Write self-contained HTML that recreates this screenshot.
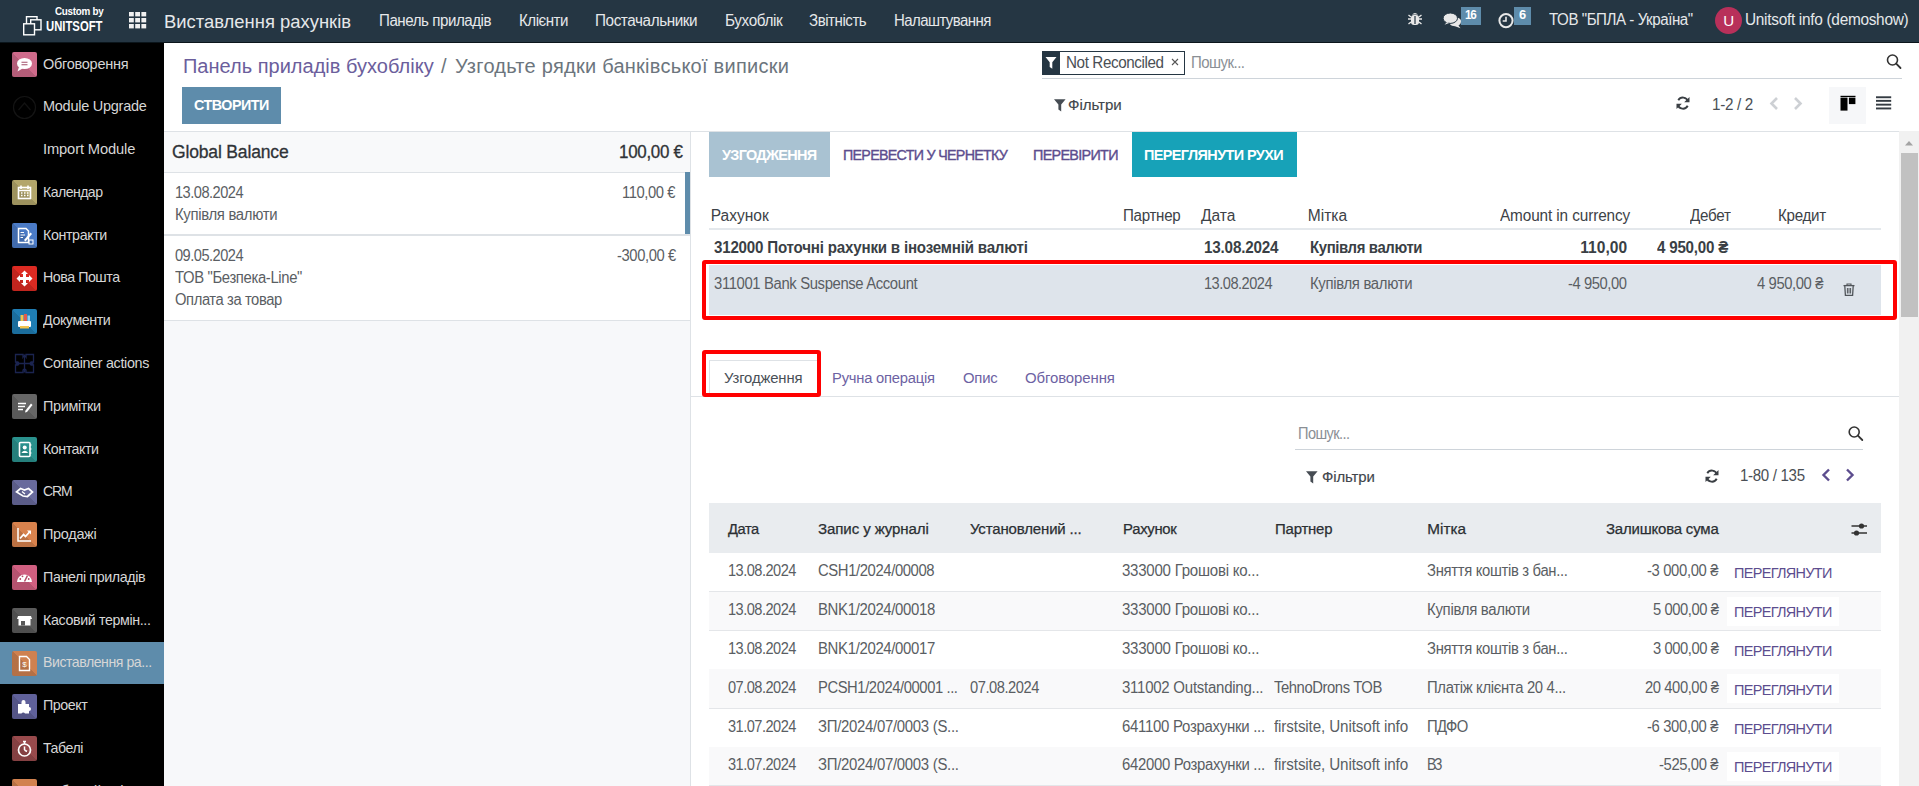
<!DOCTYPE html>
<html><head><meta charset="utf-8"><title>Odoo</title>
<style>
html,body{margin:0;padding:0;width:1919px;height:786px;overflow:hidden;background:#fff;font-family:"Liberation Sans",sans-serif;}
.t{position:absolute;white-space:nowrap;}
.r{position:absolute;box-sizing:border-box;}
svg{position:absolute;overflow:visible}
</style></head><body>
<div class="r" style="left:0px;top:0px;width:1919px;height:42px;background:#253643"></div>
<div class="r" style="left:0px;top:42px;width:1919px;height:1px;background:#0b151b"></div>
<div class="r" style="left:0px;top:43px;width:164px;height:743px;background:#000"></div>
<div class="r" style="left:164px;top:43px;width:1755px;height:743px;background:#fff"></div>
<svg style="left:23px;top:16px" width="19" height="20" viewBox="0 0 19 20"><rect x="3.5" y="0.7" width="10.5" height="10" fill="none" stroke="#fff" stroke-width="1.4"/><rect x="7.7" y="3.8" width="10.3" height="10" fill="#253643" stroke="#fff" stroke-width="1.4"/><rect x="0.7" y="7.8" width="10.8" height="11" fill="#253643" stroke="#fff" stroke-width="1.4"/></svg>
<div class="t" style="left:54.60px;top:7.09px;font-size:10.29px;line-height:10.29px;color:#ffffff;font-weight:700;letter-spacing:-0.281px;transform:scaleX(0.9578);transform-origin:0.00px 0;">Custom by</div>
<div class="t" style="left:45.80px;top:18.85px;font-size:14.71px;line-height:14.71px;color:#ffffff;font-weight:700;transform:scaleX(0.7687);transform-origin:0.00px 0;">UNITSOFT</div>
<svg style="left:129px;top:12px" width="18" height="17"><rect x="0.0" y="0.0" width="4.8" height="4.4" fill="#f0f0f0"/><rect x="6.2" y="0.0" width="4.8" height="4.4" fill="#f0f0f0"/><rect x="12.4" y="0.0" width="4.8" height="4.4" fill="#f0f0f0"/><rect x="0.0" y="6.0" width="4.8" height="4.4" fill="#f0f0f0"/><rect x="6.2" y="6.0" width="4.8" height="4.4" fill="#f0f0f0"/><rect x="12.4" y="6.0" width="4.8" height="4.4" fill="#f0f0f0"/><rect x="0.0" y="12.0" width="4.8" height="4.4" fill="#f0f0f0"/><rect x="6.2" y="12.0" width="4.8" height="4.4" fill="#f0f0f0"/><rect x="12.4" y="12.0" width="4.8" height="4.4" fill="#f0f0f0"/></svg>
<div class="t" style="left:163.80px;top:12.50px;font-size:18.43px;line-height:18.43px;color:#e6e8ea;transform:scaleX(0.9996);transform-origin:0.00px 0;">Виставлення рахунків</div>
<div class="t" style="left:379.30px;top:12.76px;font-size:16.0px;line-height:16.0px;color:#e6e8ea;letter-spacing:-0.490px;transform:scaleX(0.9455);transform-origin:0.00px 0;">Панель приладів</div>
<div class="t" style="left:519.00px;top:12.76px;font-size:16.0px;line-height:16.0px;color:#e6e8ea;letter-spacing:-0.514px;transform:scaleX(0.9444);transform-origin:0.00px 0;">Клієнти</div>
<div class="t" style="left:595.00px;top:12.76px;font-size:16.0px;line-height:16.0px;color:#e6e8ea;letter-spacing:-0.431px;transform:scaleX(0.9541);transform-origin:0.00px 0;">Постачальники</div>
<div class="t" style="left:725.20px;top:12.76px;font-size:16.0px;line-height:16.0px;color:#e6e8ea;letter-spacing:-0.402px;transform:scaleX(0.9556);transform-origin:0.00px 0;">Бухоблік</div>
<div class="t" style="left:809.30px;top:12.76px;font-size:16.0px;line-height:16.0px;color:#e6e8ea;letter-spacing:-0.476px;transform:scaleX(0.9415);transform-origin:0.00px 0;">Звітність</div>
<div class="t" style="left:893.70px;top:12.76px;font-size:16.0px;line-height:16.0px;color:#e6e8ea;letter-spacing:-0.624px;transform:scaleX(0.9379);transform-origin:0.00px 0;">Налаштування</div>
<svg style="left:1407px;top:11px" width="16" height="16" viewBox="0 0 16 16"><path d="M5 3.5 Q8 0.5 11 3.5 Z" fill="#e8e8e8"/><rect x="4" y="4" width="8" height="10" rx="3" fill="#e8e8e8"/><rect x="7.4" y="5" width="1.2" height="8" fill="#253643"/><path d="M1 8h3M12 8h3M1.5 4l2.5 2M14.5 4l-2.5 2M1.5 13l2.5-2M14.5 13l-2.5-2" stroke="#e8e8e8" stroke-width="1.4"/></svg>
<svg style="left:1443px;top:12px" width="19" height="17" viewBox="0 0 19 17"><path d="M13.5 5.5 Q18.5 6 18 10 Q17.8 12.5 15.5 13.5 L17.5 16.2 L12 14.2 Q8.5 14.2 7 12.5 Z" fill="#e8e8e8"/><ellipse cx="7.3" cy="6.2" rx="7.2" ry="5.2" fill="#e8e8e8" stroke="#253643" stroke-width="1"/><path d="M1.5 12.8 L4 10 L6 11 Z" fill="#e8e8e8"/></svg>
<div class="r" style="left:1461px;top:7px;width:20px;height:18px;background:#5e8cab"></div>
<div class="t" style="left:1465.00px;top:9.01px;font-size:12.86px;line-height:12.86px;color:#ffffff;font-weight:700;letter-spacing:-1.365px;transform:scaleX(0.9045);transform-origin:0.00px 0;">16</div>
<svg style="left:1498px;top:12px" width="17" height="17" viewBox="0 0 17 17"><circle cx="8" cy="8.6" r="6.6" fill="none" stroke="#e8e8e8" stroke-width="2"/><path d="M8 4.8 V9 H4.7" fill="none" stroke="#e8e8e8" stroke-width="1.6"/></svg>
<div class="r" style="left:1513.5px;top:7px;width:17px;height:18px;background:#5e8cab"></div>
<div class="t" style="left:1519.00px;top:9.01px;font-size:12.86px;line-height:12.86px;color:#ffffff;font-weight:700;">6</div>
<div class="t" style="left:1548.90px;top:12.46px;font-size:16.0px;line-height:16.0px;color:#e6e8ea;letter-spacing:-0.479px;transform:scaleX(0.9437);transform-origin:0.00px 0;">ТОВ "БПЛА - Україна"</div>
<div class="r" style="left:1714.8px;top:6.9px;width:27px;height:27px;border-radius:50%;background:#b8305a"></div>
<div class="t" style="left:1723.30px;top:13.18px;font-size:15.14px;line-height:15.14px;color:#ffffff;">U</div>
<div class="t" style="left:1745.40px;top:12.46px;font-size:16.0px;line-height:16.0px;color:#e6e8ea;letter-spacing:-0.296px;transform:scaleX(0.9615);transform-origin:0.00px 0;">Unitsoft info (demoshow)</div>
<div class="r" style="left:0px;top:642px;width:164px;height:42px;background:#5e8cab"></div>
<div class="r" style="left:12px;top:52.0px;width:25px;height:25px;background:#cf6b8b;border-radius:2px"></div>
<div class="r" style="left:12px;top:52.00px;width:25px;height:25px;background:linear-gradient(45deg,rgba(0,0,0,0.13) 50%,rgba(0,0,0,0) 50%);border-radius:2px"></div>
<svg style="left:12px;top:52.00px" width="25" height="25" viewBox="0 0 25 25"><ellipse cx="12.5" cy="11.5" rx="7.5" ry="5.5" fill="#ffffff"/><path d="M7 15 L5.5 19.5 L10.5 16.5 Z" fill="#ffffff"/><path d="M9.5 10.2 H15.5 M9.5 12.8 H15.5" stroke="#a2506b" stroke-width="1.1"/></svg>
<div class="t" style="left:42.80px;top:55.60px;font-size:15.0px;line-height:15.0px;color:#d6d6d6;letter-spacing:-0.292px;transform:scaleX(0.9680);transform-origin:0.00px 0;">Обговорення</div>
<svg style="left:12px;top:94.77px" width="25" height="25" viewBox="0 0 25 25"><circle cx="12.5" cy="12.5" r="11" fill="none" stroke="#141414" stroke-width="1.2"/><path d="M6.5 15 L12.5 8 L18.5 15" fill="none" stroke="#121212" stroke-width="1.2"/></svg>
<div class="t" style="left:42.80px;top:98.37px;font-size:15.0px;line-height:15.0px;color:#d6d6d6;letter-spacing:-0.278px;transform:scaleX(0.9675);transform-origin:0.00px 0;">Module Upgrade</div>
<div class="t" style="left:42.80px;top:141.14px;font-size:15.0px;line-height:15.0px;color:#d6d6d6;letter-spacing:-0.145px;transform:scaleX(0.9818);transform-origin:0.00px 0;">Import Module</div>
<div class="r" style="left:12px;top:180.31px;width:25px;height:25px;background:#b3a66b;border-radius:2px"></div>
<div class="r" style="left:12px;top:180.31px;width:25px;height:25px;background:linear-gradient(45deg,rgba(0,0,0,0.13) 50%,rgba(0,0,0,0) 50%);border-radius:2px"></div>
<svg style="left:12px;top:180.31px" width="25" height="25" viewBox="0 0 25 25"><rect x="6.5" y="7.5" width="12" height="11" fill="none" stroke="#ffffff" stroke-width="1.6"/><path d="M9 5.5 V9 M16 5.5 V9 M6.5 10.5 H18.5" stroke="#ffffff" stroke-width="1.6"/><path d="M9 13 h1.5 M12 13 h1.5 M15 13 h1.5 M9 15.5 h1.5 M12 15.5 h1.5 M15 15.5 h1.5" stroke="#ffffff" stroke-width="1.3"/></svg>
<div class="t" style="left:42.80px;top:183.91px;font-size:15.0px;line-height:15.0px;color:#d6d6d6;letter-spacing:-0.582px;transform:scaleX(0.9400);transform-origin:0.00px 0;">Календар</div>
<div class="r" style="left:12px;top:223.08px;width:25px;height:25px;background:#4b7bc6;border-radius:2px"></div>
<div class="r" style="left:12px;top:223.08px;width:25px;height:25px;background:linear-gradient(45deg,rgba(0,0,0,0.13) 50%,rgba(0,0,0,0) 50%);border-radius:2px"></div>
<svg style="left:12px;top:223.08px" width="25" height="25" viewBox="0 0 25 25"><path d="M6.5 5.5 H14 L16.5 8 V19.5 H6.5 Z" fill="none" stroke="#ffffff" stroke-width="1.5"/><path d="M8.5 9.5 H12 M8.5 12 H13 M8.5 14.5 H11" stroke="#ffffff" stroke-width="1"/><path d="M12 17 L18.5 9.5 L20 11 L13.5 18.5 Z" fill="#ffffff"/><rect x="17" y="17" width="4" height="4" fill="none" stroke="#ffffff" stroke-width="1"/></svg>
<div class="t" style="left:42.80px;top:226.68px;font-size:15.0px;line-height:15.0px;color:#d6d6d6;letter-spacing:-0.423px;transform:scaleX(0.9523);transform-origin:0.00px 0;">Контракти</div>
<div class="r" style="left:12px;top:265.85px;width:25px;height:25px;background:#dc2a22;border-radius:2px"></div>
<div class="r" style="left:12px;top:265.85px;width:25px;height:25px;background:linear-gradient(45deg,rgba(0,0,0,0.13) 50%,rgba(0,0,0,0) 50%);border-radius:2px"></div>
<svg style="left:12px;top:265.85px" width="25" height="25" viewBox="0 0 25 25"><path d="M12.5 4.5 L16 8 H14 V11 H17 V9 L20.5 12.5 L17 16 V14 H14 V17 H16 L12.5 20.5 L9 17 H11 V14 H8 V16 L4.5 12.5 L8 9 V11 H11 V8 H9 Z" fill="#ffffff"/></svg>
<div class="t" style="left:42.80px;top:269.45px;font-size:15.0px;line-height:15.0px;color:#d6d6d6;letter-spacing:-0.490px;transform:scaleX(0.9485);transform-origin:0.00px 0;">Нова Пошта</div>
<div class="r" style="left:12px;top:308.62px;width:25px;height:25px;background:#1f7db3;border-radius:2px"></div>
<div class="r" style="left:12px;top:308.62px;width:25px;height:25px;background:linear-gradient(45deg,rgba(0,0,0,0.13) 50%,rgba(0,0,0,0) 50%);border-radius:2px"></div>
<svg style="left:12px;top:308.62px" width="25" height="25" viewBox="0 0 25 25"><rect x="8.5" y="6" width="3" height="8" fill="#f2c44e"/><rect x="12" y="5" width="3" height="9" fill="#e05a4e"/><rect x="15.5" y="6.5" width="2.5" height="7.5" fill="#8fd0f0"/><rect x="6" y="12" width="13" height="6" rx="1" fill="#ffffff"/><rect x="8" y="17" width="9" height="2.5" fill="#f2c44e"/></svg>
<div class="t" style="left:42.80px;top:312.22px;font-size:15.0px;line-height:15.0px;color:#d6d6d6;letter-spacing:-0.455px;transform:scaleX(0.9514);transform-origin:0.00px 0;">Документи</div>
<svg style="left:12px;top:351.39px" width="25" height="25" viewBox="0 0 25 25"><path d="M3.5 3.5 H11 V6 A1.8 1.8 0 0 1 14 6 V3.5 H21.5 V11 H19 A1.8 1.8 0 0 0 19 14 H21.5 V21.5 H14 V19 A1.8 1.8 0 0 0 11 19 V21.5 H3.5 V14 H6 A1.8 1.8 0 0 0 6 11 H3.5 Z M12.5 3.5 V21.5 M3.5 12.5 H21.5" fill="none" stroke="#1b2450" stroke-width="1.3"/></svg>
<div class="t" style="left:42.80px;top:354.99px;font-size:15.0px;line-height:15.0px;color:#d6d6d6;letter-spacing:-0.331px;transform:scaleX(0.9546);transform-origin:0.00px 0;">Container actions</div>
<div class="r" style="left:12px;top:394.16px;width:25px;height:25px;background:#666666;border-radius:2px"></div>
<div class="r" style="left:12px;top:394.16px;width:25px;height:25px;background:linear-gradient(45deg,rgba(0,0,0,0.13) 50%,rgba(0,0,0,0) 50%);border-radius:2px"></div>
<svg style="left:12px;top:394.16px" width="25" height="25" viewBox="0 0 25 25"><path d="M6 9.5 H14 M6 12.5 H13 M6 15.5 H11" stroke="#ffffff" stroke-width="1.4"/><path d="M13.5 16.5 L19 9.5 L20.5 11 L15 18 L13 18.5 Z" fill="#ffffff"/></svg>
<div class="t" style="left:42.80px;top:397.76px;font-size:15.0px;line-height:15.0px;color:#d6d6d6;letter-spacing:-0.353px;transform:scaleX(0.9607);transform-origin:0.00px 0;">Примітки</div>
<div class="r" style="left:12px;top:436.93px;width:25px;height:25px;background:#2a918d;border-radius:2px"></div>
<div class="r" style="left:12px;top:436.93px;width:25px;height:25px;background:linear-gradient(45deg,rgba(0,0,0,0.13) 50%,rgba(0,0,0,0) 50%);border-radius:2px"></div>
<svg style="left:12px;top:436.93px" width="25" height="25" viewBox="0 0 25 25"><rect x="7.5" y="5.5" width="10.5" height="14" rx="1" fill="none" stroke="#ffffff" stroke-width="1.6"/><circle cx="12.7" cy="10.5" r="2" fill="#ffffff"/><path d="M9.3 16 Q12.7 11.5 16.2 16 Z" fill="#ffffff"/><path d="M18 8 h1.5 M18 12 h1.5 M18 16 h1.5" stroke="#ffffff" stroke-width="1.2"/></svg>
<div class="t" style="left:42.80px;top:440.53px;font-size:15.0px;line-height:15.0px;color:#d6d6d6;letter-spacing:-0.470px;transform:scaleX(0.9473);transform-origin:0.00px 0;">Контакти</div>
<div class="r" style="left:12px;top:479.7px;width:25px;height:25px;background:#686a9c;border-radius:2px"></div>
<div class="r" style="left:12px;top:479.70px;width:25px;height:25px;background:linear-gradient(45deg,rgba(0,0,0,0.13) 50%,rgba(0,0,0,0) 50%);border-radius:2px"></div>
<svg style="left:12px;top:479.70px" width="25" height="25" viewBox="0 0 25 25"><path d="M4.5 12 L8.5 8.5 L12.5 10 L16.5 8.5 L20.5 12 L15.5 16.5 L11 16 Z" fill="none" stroke="#ffffff" stroke-width="1.7"/><path d="M10 11.5 L13 14" stroke="#ffffff" stroke-width="1.4"/></svg>
<div class="t" style="left:42.80px;top:483.30px;font-size:15.0px;line-height:15.0px;color:#d6d6d6;letter-spacing:-1.205px;transform:scaleX(0.9294);transform-origin:0.00px 0;">CRM</div>
<div class="r" style="left:12px;top:522.47px;width:25px;height:25px;background:#d8824d;border-radius:2px"></div>
<div class="r" style="left:12px;top:522.47px;width:25px;height:25px;background:linear-gradient(45deg,rgba(0,0,0,0.13) 50%,rgba(0,0,0,0) 50%);border-radius:2px"></div>
<svg style="left:12px;top:522.47px" width="25" height="25" viewBox="0 0 25 25"><path d="M6 6 V19 H19" fill="none" stroke="#ffffff" stroke-width="1.5"/><path d="M8 16.5 L11.5 12.5 L13.5 14.5 L18 9.5" fill="none" stroke="#ffffff" stroke-width="1.8"/><path d="M15 8.5 H19 V12.5 Z" fill="#ffffff"/></svg>
<div class="t" style="left:42.80px;top:526.07px;font-size:15.0px;line-height:15.0px;color:#d6d6d6;letter-spacing:-0.331px;transform:scaleX(0.9656);transform-origin:0.00px 0;">Продажі</div>
<div class="r" style="left:12px;top:565.24px;width:25px;height:25px;background:#d05f80;border-radius:2px"></div>
<div class="r" style="left:12px;top:565.24px;width:25px;height:25px;background:linear-gradient(45deg,rgba(0,0,0,0.13) 50%,rgba(0,0,0,0) 50%);border-radius:2px"></div>
<svg style="left:12px;top:565.24px" width="25" height="25" viewBox="0 0 25 25"><path d="M5 17 A7.5 7.5 0 0 1 20 17 Z" fill="#ffffff"/><path d="M12.5 16.5 L15.5 10.5" stroke="#b44a66" stroke-width="1.5"/><circle cx="8.3" cy="14" r="0.9" fill="#b44a66"/><circle cx="10.5" cy="11.3" r="0.9" fill="#b44a66"/><circle cx="16.7" cy="14" r="0.9" fill="#b44a66"/></svg>
<div class="t" style="left:42.80px;top:568.84px;font-size:15.0px;line-height:15.0px;color:#d6d6d6;letter-spacing:-0.395px;transform:scaleX(0.9512);transform-origin:0.00px 0;">Панелі приладів</div>
<div class="r" style="left:12px;top:608.01px;width:25px;height:25px;background:#5a5a5a;border-radius:2px"></div>
<div class="r" style="left:12px;top:608.01px;width:25px;height:25px;background:linear-gradient(45deg,rgba(0,0,0,0.13) 50%,rgba(0,0,0,0) 50%);border-radius:2px"></div>
<svg style="left:12px;top:608.01px" width="25" height="25" viewBox="0 0 25 25"><path d="M6 8 H19 L20 11 H5 Z" fill="#ffffff"/><rect x="6.5" y="11" width="12" height="6.5" fill="#ffffff"/><rect x="9" y="13" width="4" height="4.5" fill="#5a5a5a"/></svg>
<div class="t" style="left:42.80px;top:611.61px;font-size:15.0px;line-height:15.0px;color:#d6d6d6;letter-spacing:-0.382px;transform:scaleX(0.9490);transform-origin:0.00px 0;">Касовий термін...</div>
<div class="r" style="left:12px;top:650.78px;width:25px;height:25px;background:#cf8150;border-radius:2px"></div>
<div class="r" style="left:12px;top:650.78px;width:25px;height:25px;background:linear-gradient(45deg,rgba(0,0,0,0.13) 50%,rgba(0,0,0,0) 50%);border-radius:2px"></div>
<svg style="left:12px;top:650.78px" width="25" height="25" viewBox="0 0 25 25"><path d="M7.5 5.5 H14.5 L17.5 8.5 V19.5 H7.5 Z" fill="none" stroke="#ffffff" stroke-width="1.4"/><text x="12.5" y="16.3" font-size="8" fill="#ffffff" text-anchor="middle" font-family="Liberation Sans">$</text></svg>
<div class="t" style="left:42.80px;top:654.38px;font-size:15.0px;line-height:15.0px;color:#d6d6d6;letter-spacing:-0.471px;transform:scaleX(0.9391);transform-origin:0.00px 0;">Виставлення ра...</div>
<div class="r" style="left:12px;top:693.55px;width:25px;height:25px;background:#60619a;border-radius:2px"></div>
<div class="r" style="left:12px;top:693.55px;width:25px;height:25px;background:linear-gradient(45deg,rgba(0,0,0,0.13) 50%,rgba(0,0,0,0) 50%);border-radius:2px"></div>
<svg style="left:12px;top:693.55px" width="25" height="25" viewBox="0 0 25 25"><path d="M6 10 H9.5 V8 A2 2 0 0 1 13.5 8 V10 H17 V13 A2 2 0 0 1 17 17 V19.5 H13 A2 2 0 0 0 9.5 19.5 H6 Z" fill="#ffffff"/></svg>
<div class="t" style="left:42.80px;top:697.15px;font-size:15.0px;line-height:15.0px;color:#d6d6d6;letter-spacing:-0.471px;transform:scaleX(0.9523);transform-origin:0.00px 0;">Проект</div>
<div class="r" style="left:12px;top:736.32px;width:25px;height:25px;background:#984a4c;border-radius:2px"></div>
<div class="r" style="left:12px;top:736.32px;width:25px;height:25px;background:linear-gradient(45deg,rgba(0,0,0,0.13) 50%,rgba(0,0,0,0) 50%);border-radius:2px"></div>
<svg style="left:12px;top:736.32px" width="25" height="25" viewBox="0 0 25 25"><circle cx="12.5" cy="14" r="6" fill="none" stroke="#ffffff" stroke-width="1.7"/><path d="M11 5.5 H14 M12.5 5.5 V8 M12.5 14 V10.5 M12.5 14 L15 15.5" stroke="#ffffff" stroke-width="1.5"/></svg>
<div class="t" style="left:42.80px;top:739.92px;font-size:15.0px;line-height:15.0px;color:#d6d6d6;letter-spacing:-0.493px;transform:scaleX(0.9454);transform-origin:0.00px 0;">Табелі</div>
<div class="r" style="left:12px;top:779.09px;width:25px;height:25px;background:#d2824f;border-radius:2px"></div>
<div class="r" style="left:12px;top:779.09px;width:25px;height:25px;background:linear-gradient(45deg,rgba(0,0,0,0.13) 50%,rgba(0,0,0,0) 50%);border-radius:2px"></div>
<svg style="left:12px;top:779.09px" width="25" height="25" viewBox="0 0 25 25"><circle cx="12.5" cy="13" r="5" fill="#ffffff"/></svg>
<div class="t" style="left:42.80px;top:782.69px;font-size:15.0px;line-height:15.0px;color:#d6d6d6;">Робочий стіл</div>
<div class="r" style="left:164px;top:131px;width:1735px;height:1px;background:#dee2e6"></div>
<div class="t" style="left:182.90px;top:56.27px;font-size:20.0px;line-height:20.0px;color:#6b5e9c;letter-spacing:0.015px;">Панель приладів бухобліку</div>
<div class="t" style="left:441.00px;top:56.27px;font-size:20.0px;line-height:20.0px;color:#6c757d;">/</div>
<div class="t" style="left:455.00px;top:56.27px;font-size:20.0px;line-height:20.0px;color:#6c757d;letter-spacing:0.256px;">Узгодьте рядки банківської виписки</div>
<div class="r" style="left:182px;top:87px;width:99px;height:37px;background:#5e8cab"></div>
<div class="t" style="left:193.70px;top:97.10px;font-size:15.0px;line-height:15.0px;color:#ffffff;font-weight:700;letter-spacing:-0.526px;transform:scaleX(0.9554);transform-origin:0.00px 0;">СТВОРИТИ</div>
<div class="r" style="left:1042px;top:51px;width:143px;height:24px;border:1px solid #253643;background:#fff"></div>
<div class="r" style="left:1042px;top:51px;width:18px;height:24px;background:#253643"></div>
<svg style="left:1045px;top:56px" width="12" height="14" viewBox="0 0 12 14"><path d="M0.5 1 H11.5 L7.3 6.3 V12.8 L4.7 11 V6.3 Z" fill="#fff"/></svg>
<div class="t" style="left:1066.00px;top:54.56px;font-size:16.0px;line-height:16.0px;color:#4a4f55;letter-spacing:-0.414px;transform:scaleX(0.9504);transform-origin:0.00px 0;">Not Reconciled</div>
<svg style="left:1171px;top:58px" width="8" height="8" viewBox="0 0 8 8"><path d="M1 1L7 7M7 1L1 7" stroke="#555" stroke-width="1.1"/></svg>
<div class="t" style="left:1191.00px;top:54.56px;font-size:16.0px;line-height:16.0px;color:#8a8f95;letter-spacing:-0.557px;transform:scaleX(0.9367);transform-origin:0.00px 0;">Пошук...</div>
<div class="r" style="left:1042px;top:78px;width:860px;height:1px;background:#ced4da"></div>
<svg style="left:1886px;top:54px" width="17" height="15" viewBox="0 0 17 15"><circle cx="6.5" cy="6" r="5" fill="none" stroke="#333" stroke-width="1.6"/><path d="M10.2 9.7 L14.5 14" stroke="#333" stroke-width="1.8" stroke-linecap="round"/></svg>
<svg style="left:1053.5px;top:98.5px" width="12" height="13" viewBox="0 0 12 13"><path d="M0 0.3 H11.6 L7.2 5.6 V12.6 L4.4 10.6 V5.6 Z" fill="#464c53"/></svg>
<div class="t" style="left:1068.20px;top:97.18px;font-size:15.14px;line-height:15.14px;color:#41464c;letter-spacing:-0.038px;-webkit-text-stroke:0.15px #41464c;transform:scaleX(0.9958);transform-origin:0.00px 0;">Фільтри</div>
<svg style="left:1676px;top:96px" width="14" height="14" viewBox="0 0 14 14"><path d="M12 5.5 A5.3 5.3 0 0 0 2.3 4.2" fill="none" stroke="#3a3f44" stroke-width="1.9"/><path d="M1.8 8.5 A5.3 5.3 0 0 0 11.7 9.8" fill="none" stroke="#3a3f44" stroke-width="1.9"/><path d="M13.5 1 V6.3 H8.2 Z" fill="#3a3f44"/><path d="M0.5 13 V7.7 H5.8 Z" fill="#3a3f44"/></svg>
<div class="t" style="left:1711.80px;top:96.76px;font-size:16.0px;line-height:16.0px;color:#4a4f55;letter-spacing:-0.354px;transform:scaleX(0.9531);transform-origin:0.00px 0;">1-2 / 2</div>
<svg style="left:1769px;top:97px" width="10" height="13" viewBox="0 0 10 13"><path d="M8 1 L2.5 6.5 L8 12" fill="none" stroke="#cdd0d4" stroke-width="2.6"/></svg>
<svg style="left:1793px;top:97px" width="10" height="13" viewBox="0 0 10 13"><path d="M2 1 L7.5 6.5 L2 12" fill="none" stroke="#cdd0d4" stroke-width="2.6"/></svg>
<div class="r" style="left:1829px;top:87px;width:37px;height:37px;background:#f6f7f9"></div>
<svg style="left:1840px;top:95px" width="16" height="16" viewBox="0 0 16 16"><rect x="0.5" y="0.8" width="15" height="1.2" fill="#000"/><rect x="0.5" y="2.6" width="7" height="13" fill="#000"/><rect x="8.9" y="2.6" width="6.5" height="6.5" fill="#000"/></svg>
<svg style="left:1876px;top:96px" width="16" height="14" viewBox="0 0 16 14"><rect x="0" y="0.3" width="15.2" height="1.9" fill="#343b42"/><rect x="0" y="3.9" width="15.2" height="1.9" fill="#343b42"/><rect x="0" y="7.7" width="15.2" height="1.9" fill="#343b42"/><rect x="0" y="11.5" width="15.2" height="1.9" fill="#343b42"/></svg>
<div class="r" style="left:164px;top:132px;width:526px;height:40px;background:#f8f9fa"></div>
<div class="r" style="left:164px;top:172px;width:526px;height:1px;background:#dee2e6"></div>
<div class="t" style="left:171.70px;top:143.78px;font-size:17.86px;line-height:17.86px;color:#2f3337;letter-spacing:-0.173px;-webkit-text-stroke:0.3px #2f3337;transform:scaleX(0.9814);transform-origin:0.00px 0;">Global Balance</div>
<div class="t" style="left:618.80px;top:143.75px;font-size:17.43px;line-height:17.43px;color:#2f3337;letter-spacing:-0.279px;-webkit-text-stroke:0.3px #2f3337;transform:scaleX(0.9713);transform-origin:0.00px 0;">100,00 €</div>
<div class="t" style="left:174.90px;top:184.82px;font-size:15.57px;line-height:15.57px;color:#5a5e63;letter-spacing:-0.536px;transform:scaleX(0.9380);transform-origin:0.00px 0;">13.08.2024</div>
<div class="t" style="left:174.90px;top:206.82px;font-size:15.57px;line-height:15.57px;color:#5a5e63;letter-spacing:-0.351px;transform:scaleX(0.9590);transform-origin:0.00px 0;">Купівля валюти</div>
<div class="t" style="left:622.30px;top:184.82px;font-size:15.57px;line-height:15.57px;color:#5a5e63;letter-spacing:-0.432px;transform:scaleX(0.9490);transform-origin:0.00px 0;">110,00 €</div>
<div class="r" style="left:685px;top:172px;width:5px;height:62px;background:#5e8cab"></div>
<div class="r" style="left:164px;top:234px;width:526px;height:2px;background:#dee2e6"></div>
<div class="t" style="left:174.90px;top:247.82px;font-size:15.57px;line-height:15.57px;color:#5a5e63;letter-spacing:-0.536px;transform:scaleX(0.9380);transform-origin:0.00px 0;">09.05.2024</div>
<div class="t" style="left:174.90px;top:269.82px;font-size:15.57px;line-height:15.57px;color:#5a5e63;letter-spacing:-0.376px;transform:scaleX(0.9542);transform-origin:0.00px 0;">ТОВ "Безпека-Line"</div>
<div class="t" style="left:174.90px;top:292.22px;font-size:15.57px;line-height:15.57px;color:#5a5e63;letter-spacing:-0.432px;transform:scaleX(0.9491);transform-origin:0.00px 0;">Оплата за товар</div>
<div class="t" style="left:616.60px;top:247.82px;font-size:15.57px;line-height:15.57px;color:#5a5e63;letter-spacing:-0.417px;transform:scaleX(0.9492);transform-origin:0.00px 0;">-300,00 €</div>
<div class="r" style="left:164px;top:320px;width:526px;height:1px;background:#dee2e6"></div>
<div class="r" style="left:164px;top:321px;width:526px;height:465px;background:#f7f8fa"></div>
<div class="r" style="left:690px;top:131px;width:1px;height:655px;background:#dee2e6"></div>
<div class="r" style="left:709px;top:132px;width:121px;height:45px;background:#a9c2d2"></div>
<div class="t" style="left:721.70px;top:147.34px;font-size:15.43px;line-height:15.43px;color:#ffffff;font-weight:700;letter-spacing:-0.748px;transform:scaleX(0.9378);transform-origin:0.00px 0;">УЗГОДЖЕННЯ</div>
<div class="t" style="left:843.20px;top:147.34px;font-size:15.43px;line-height:15.43px;color:#5c4d8e;letter-spacing:-0.760px;-webkit-text-stroke:0.4px #5c4d8e;transform:scaleX(0.9252);transform-origin:0.00px 0;">ПЕРЕВЕСТИ У ЧЕРНЕТКУ</div>
<div class="t" style="left:1033.30px;top:147.34px;font-size:15.43px;line-height:15.43px;color:#5c4d8e;letter-spacing:-0.739px;-webkit-text-stroke:0.4px #5c4d8e;transform:scaleX(0.9325);transform-origin:0.00px 0;">ПЕРЕВІРИТИ</div>
<div class="r" style="left:1132px;top:132px;width:165px;height:45px;background:#17a2b8"></div>
<div class="t" style="left:1144.00px;top:147.34px;font-size:15.43px;line-height:15.43px;color:#ffffff;font-weight:700;letter-spacing:-0.662px;transform:scaleX(0.9375);transform-origin:0.00px 0;">ПЕРЕГЛЯНУТИ РУХИ</div>
<div class="t" style="left:710.70px;top:208.12px;font-size:15.57px;line-height:15.57px;color:#3d4247;">Рахунок</div>
<div class="t" style="left:1123.30px;top:208.12px;font-size:15.57px;line-height:15.57px;color:#3d4247;letter-spacing:-0.300px;transform:scaleX(0.9705);transform-origin:0.00px 0;">Партнер</div>
<div class="t" style="left:1201.00px;top:208.12px;font-size:15.57px;line-height:15.57px;color:#3d4247;">Дата</div>
<div class="t" style="left:1307.80px;top:208.12px;font-size:15.57px;line-height:15.57px;color:#3d4247;">Мітка</div>
<div class="t" style="left:1499.80px;top:208.12px;font-size:15.57px;line-height:15.57px;color:#3d4247;letter-spacing:-0.114px;transform:scaleX(0.9855);transform-origin:0.00px 0;">Amount in currency</div>
<div class="t" style="left:1689.90px;top:208.12px;font-size:15.57px;line-height:15.57px;color:#3d4247;letter-spacing:-0.266px;transform:scaleX(0.9753);transform-origin:0.00px 0;">Дебет</div>
<div class="t" style="left:1777.70px;top:208.12px;font-size:15.57px;line-height:15.57px;color:#3d4247;letter-spacing:-0.274px;transform:scaleX(0.9731);transform-origin:0.00px 0;">Кредит</div>
<div class="r" style="left:709px;top:228px;width:1172px;height:2px;background:#e4e8ec"></div>
<div class="t" style="left:713.80px;top:239.82px;font-size:15.57px;line-height:15.57px;color:#3a3f45;font-weight:700;letter-spacing:-0.224px;transform:scaleX(0.9730);transform-origin:0.00px 0;">312000 Поточні рахунки в іноземній валюті</div>
<div class="t" style="left:1204.20px;top:239.82px;font-size:15.57px;line-height:15.57px;color:#3a3f45;font-weight:700;letter-spacing:-0.188px;transform:scaleX(0.9782);transform-origin:0.00px 0;">13.08.2024</div>
<div class="t" style="left:1310.30px;top:239.82px;font-size:15.57px;line-height:15.57px;color:#3a3f45;font-weight:700;letter-spacing:-0.395px;transform:scaleX(0.9581);transform-origin:0.00px 0;">Купівля валюти</div>
<div class="t" style="left:1580.30px;top:239.82px;font-size:15.57px;line-height:15.57px;color:#3a3f45;font-weight:700;">110,00</div>
<div class="t" style="left:1657.00px;top:239.82px;font-size:15.57px;line-height:15.57px;color:#3a3f45;font-weight:700;letter-spacing:-0.225px;transform:scaleX(0.9730);transform-origin:0.00px 0;">4 950,00 ₴</div>
<div class="r" style="left:709px;top:265px;width:1172px;height:50px;background:#dee4eb"></div>
<div class="r" style="left:702px;top:260px;width:1195px;height:60px;border:4px solid #ff0000;border-radius:3px"></div>
<div class="t" style="left:713.80px;top:276.12px;font-size:15.57px;line-height:15.57px;color:#5a5e63;letter-spacing:-0.382px;transform:scaleX(0.9539);transform-origin:0.00px 0;">311001 Bank Suspense Account</div>
<div class="t" style="left:1204.20px;top:276.12px;font-size:15.57px;line-height:15.57px;color:#5a5e63;letter-spacing:-0.536px;transform:scaleX(0.9380);transform-origin:0.00px 0;">13.08.2024</div>
<div class="t" style="left:1310.30px;top:276.12px;font-size:15.57px;line-height:15.57px;color:#5a5e63;letter-spacing:-0.351px;transform:scaleX(0.9590);transform-origin:0.00px 0;">Купівля валюти</div>
<div class="t" style="left:1568.00px;top:276.12px;font-size:15.57px;line-height:15.57px;color:#5a5e63;letter-spacing:-0.430px;transform:scaleX(0.9476);transform-origin:0.00px 0;">-4 950,00</div>
<div class="t" style="left:1757.00px;top:276.12px;font-size:15.57px;line-height:15.57px;color:#5a5e63;letter-spacing:-0.410px;transform:scaleX(0.9498);transform-origin:0.00px 0;">4 950,00 ₴</div>
<svg style="left:1843px;top:283px" width="12" height="13" viewBox="0 0 12 13"><path d="M0.5 2.6 H11.5" stroke="#50555a" stroke-width="1.3"/><path d="M4 2.4 V1 H8 V2.4" fill="none" stroke="#50555a" stroke-width="1.1"/><path d="M1.8 3 L2.4 12.3 H9.6 L10.2 3" fill="none" stroke="#50555a" stroke-width="1.3"/><path d="M4.4 5 V10.5 M6 5 V10.5 M7.6 5 V10.5" stroke="#50555a" stroke-width="1"/></svg>
<div class="r" style="left:691px;top:396px;width:1208px;height:1px;background:#dee2e6"></div>
<div class="r" style="left:709px;top:360px;width:112px;height:36px;border:1px solid #dee2e6;border-bottom:0;background:#fff"></div>
<div class="t" style="left:723.90px;top:370.38px;font-size:15.14px;line-height:15.14px;color:#495057;letter-spacing:-0.148px;transform:scaleX(0.9836);transform-origin:0.00px 0;">Узгодження</div>
<div class="t" style="left:831.50px;top:370.38px;font-size:15.14px;line-height:15.14px;color:#6d62a3;letter-spacing:-0.212px;transform:scaleX(0.9746);transform-origin:0.00px 0;">Ручна операція</div>
<div class="t" style="left:962.70px;top:370.38px;font-size:15.14px;line-height:15.14px;color:#6d62a3;letter-spacing:-0.227px;transform:scaleX(0.9811);transform-origin:0.00px 0;">Опис</div>
<div class="t" style="left:1025.30px;top:370.38px;font-size:15.14px;line-height:15.14px;color:#6d62a3;letter-spacing:-0.108px;transform:scaleX(0.9883);transform-origin:0.00px 0;">Обговорення</div>
<div class="r" style="left:701.5px;top:350.4px;width:119px;height:47px;border:4px solid #ff0000;border-radius:3px"></div>
<div class="r" style="left:1899px;top:131px;width:20px;height:655px;background:#f1f1f1"></div>
<div class="r" style="left:1901px;top:153px;width:17px;height:164px;background:#c1c1c1"></div>
<svg style="left:1904px;top:140px" width="10" height="6" viewBox="0 0 10 6"><path d="M1 5.5 L5 1 L9 5.5 Z" fill="#a3a3a3"/></svg>
<div class="t" style="left:1297.60px;top:425.90px;font-size:15.71px;line-height:15.71px;color:#8a8f95;letter-spacing:-0.622px;transform:scaleX(0.9279);transform-origin:0.00px 0;">Пошук...</div>
<div class="r" style="left:1295px;top:449px;width:568px;height:1px;background:#ced4da"></div>
<svg style="left:1848px;top:426px" width="16" height="15" viewBox="0 0 16 15"><circle cx="6.2" cy="6" r="5" fill="none" stroke="#333" stroke-width="1.6"/><path d="M9.9 9.7 L14.3 14" stroke="#333" stroke-width="1.8" stroke-linecap="round"/></svg>
<svg style="left:1306px;top:471px" width="12" height="13" viewBox="0 0 12 13"><path d="M0 0.3 H11.6 L7.2 5.6 V12.6 L4.4 10.6 V5.6 Z" fill="#464c53"/></svg>
<div class="t" style="left:1321.60px;top:469.18px;font-size:15.14px;line-height:15.14px;color:#41464c;letter-spacing:-0.113px;-webkit-text-stroke:0.15px #41464c;transform:scaleX(0.9875);transform-origin:0.00px 0;">Фільтри</div>
<svg style="left:1705px;top:469px" width="14" height="14" viewBox="0 0 14 14"><path d="M12 5.5 A5.3 5.3 0 0 0 2.3 4.2" fill="none" stroke="#3a3f44" stroke-width="1.9"/><path d="M1.8 8.5 A5.3 5.3 0 0 0 11.7 9.8" fill="none" stroke="#3a3f44" stroke-width="1.9"/><path d="M13.5 1 V6.3 H8.2 Z" fill="#3a3f44"/><path d="M0.5 13 V7.7 H5.8 Z" fill="#3a3f44"/></svg>
<div class="t" style="left:1739.50px;top:468.30px;font-size:15.71px;line-height:15.71px;color:#4a4f55;letter-spacing:-0.323px;transform:scaleX(0.9588);transform-origin:0.00px 0;">1-80 / 135</div>
<svg style="left:1821px;top:468px" width="10" height="14" viewBox="0 0 10 14"><path d="M8 1.5 L2.5 7 L8 12.5" fill="none" stroke="#5c4d8e" stroke-width="2.4"/></svg>
<svg style="left:1845px;top:468px" width="10" height="14" viewBox="0 0 10 14"><path d="M2 1.5 L7.5 7 L2 12.5" fill="none" stroke="#5c4d8e" stroke-width="2.4"/></svg>
<div class="r" style="left:709px;top:503px;width:1172px;height:50px;background:#e9ecef"></div>
<div class="t" style="left:727.60px;top:521.06px;font-size:15.29px;line-height:15.29px;color:#2b2f33;letter-spacing:-0.459px;-webkit-text-stroke:0.25px #2b2f33;transform:scaleX(0.9594);transform-origin:0.00px 0;">Дата</div>
<div class="t" style="left:817.60px;top:521.06px;font-size:15.29px;line-height:15.29px;color:#2b2f33;letter-spacing:-0.110px;-webkit-text-stroke:0.25px #2b2f33;transform:scaleX(0.9865);transform-origin:0.00px 0;">Запис у журналі</div>
<div class="t" style="left:969.70px;top:521.06px;font-size:15.29px;line-height:15.29px;color:#2b2f33;letter-spacing:-0.151px;-webkit-text-stroke:0.25px #2b2f33;transform:scaleX(0.9805);transform-origin:0.00px 0;">Установлений ...</div>
<div class="t" style="left:1123.00px;top:521.06px;font-size:15.29px;line-height:15.29px;color:#2b2f33;letter-spacing:-0.275px;-webkit-text-stroke:0.25px #2b2f33;transform:scaleX(0.9712);transform-origin:0.00px 0;">Рахунок</div>
<div class="t" style="left:1275.00px;top:521.06px;font-size:15.29px;line-height:15.29px;color:#2b2f33;letter-spacing:-0.215px;-webkit-text-stroke:0.25px #2b2f33;transform:scaleX(0.9786);transform-origin:0.00px 0;">Партнер</div>
<div class="t" style="left:1427.30px;top:521.06px;font-size:15.29px;line-height:15.29px;color:#2b2f33;-webkit-text-stroke:0.25px #2b2f33;">Мітка</div>
<div class="t" style="left:1605.70px;top:521.06px;font-size:15.29px;line-height:15.29px;color:#2b2f33;letter-spacing:-0.190px;-webkit-text-stroke:0.25px #2b2f33;transform:scaleX(0.9790);transform-origin:0.00px 0;">Залишкова сума</div>
<svg style="left:1851px;top:522px" width="17" height="15" viewBox="0 0 17 15"><path d="M0.5 4 H16 M0.5 11 H16" stroke="#333" stroke-width="1.5"/><circle cx="10.5" cy="4" r="2.6" fill="#333"/><circle cx="5.5" cy="11" r="2.6" fill="#333"/></svg>
<div class="r" style="left:709px;top:591px;width:1172px;height:1px;background:#e4e6e9"></div>
<div class="t" style="left:727.60px;top:563.42px;font-size:15.57px;line-height:15.57px;color:#5a5e63;letter-spacing:-0.542px;transform:scaleX(0.9373);transform-origin:0.00px 0;">13.08.2024</div>
<div class="t" style="left:817.80px;top:563.42px;font-size:15.57px;line-height:15.57px;color:#5a5e63;letter-spacing:-0.419px;transform:scaleX(0.9542);transform-origin:0.00px 0;">CSH1/2024/00008</div>
<div class="t" style="left:1122.30px;top:563.42px;font-size:15.57px;line-height:15.57px;color:#5a5e63;letter-spacing:-0.254px;transform:scaleX(0.9671);transform-origin:0.00px 0;">333000 Грошові ко...</div>
<div class="t" style="left:1427.20px;top:563.42px;font-size:15.57px;line-height:15.57px;color:#5a5e63;letter-spacing:-0.342px;transform:scaleX(0.9536);transform-origin:0.00px 0;">Зняття коштів з бан...</div>
<div class="t" style="left:1647.00px;top:563.42px;font-size:15.57px;line-height:15.57px;color:#5a5e63;letter-spacing:-0.374px;transform:scaleX(0.9525);transform-origin:0.00px 0;">-3 000,00 ₴</div>
<div class="t" style="left:1733.90px;top:565.34px;font-size:15.43px;line-height:15.43px;color:#5c4d8e;letter-spacing:-0.710px;transform:scaleX(0.9368);transform-origin:0.00px 0;">ПЕРЕГЛЯНУТИ</div>
<div class="r" style="left:709px;top:591.8px;width:1172px;height:38.8px;background:#f9f9fa"></div>
<div class="r" style="left:1727px;top:596.8px;width:112px;height:29px;background:#fff"></div>
<div class="r" style="left:709px;top:630px;width:1172px;height:1px;background:#e4e6e9"></div>
<div class="t" style="left:727.60px;top:602.22px;font-size:15.57px;line-height:15.57px;color:#5a5e63;letter-spacing:-0.542px;transform:scaleX(0.9373);transform-origin:0.00px 0;">13.08.2024</div>
<div class="t" style="left:817.80px;top:602.22px;font-size:15.57px;line-height:15.57px;color:#5a5e63;letter-spacing:-0.361px;transform:scaleX(0.9603);transform-origin:0.00px 0;">BNK1/2024/00018</div>
<div class="t" style="left:1122.30px;top:602.22px;font-size:15.57px;line-height:15.57px;color:#5a5e63;letter-spacing:-0.254px;transform:scaleX(0.9671);transform-origin:0.00px 0;">333000 Грошові ко...</div>
<div class="t" style="left:1427.20px;top:602.22px;font-size:15.57px;line-height:15.57px;color:#5a5e63;letter-spacing:-0.323px;transform:scaleX(0.9622);transform-origin:0.00px 0;">Купівля валюти</div>
<div class="t" style="left:1652.50px;top:602.22px;font-size:15.57px;line-height:15.57px;color:#5a5e63;letter-spacing:-0.434px;transform:scaleX(0.9469);transform-origin:0.00px 0;">5 000,00 ₴</div>
<div class="t" style="left:1733.90px;top:604.14px;font-size:15.43px;line-height:15.43px;color:#5c4d8e;letter-spacing:-0.710px;transform:scaleX(0.9368);transform-origin:0.00px 0;">ПЕРЕГЛЯНУТИ</div>
<div class="r" style="left:709px;top:669px;width:1172px;height:1px;background:#e4e6e9"></div>
<div class="t" style="left:727.60px;top:641.02px;font-size:15.57px;line-height:15.57px;color:#5a5e63;letter-spacing:-0.542px;transform:scaleX(0.9373);transform-origin:0.00px 0;">13.08.2024</div>
<div class="t" style="left:817.80px;top:641.02px;font-size:15.57px;line-height:15.57px;color:#5a5e63;letter-spacing:-0.361px;transform:scaleX(0.9603);transform-origin:0.00px 0;">BNK1/2024/00017</div>
<div class="t" style="left:1122.30px;top:641.02px;font-size:15.57px;line-height:15.57px;color:#5a5e63;letter-spacing:-0.254px;transform:scaleX(0.9671);transform-origin:0.00px 0;">333000 Грошові ко...</div>
<div class="t" style="left:1427.20px;top:641.02px;font-size:15.57px;line-height:15.57px;color:#5a5e63;letter-spacing:-0.342px;transform:scaleX(0.9536);transform-origin:0.00px 0;">Зняття коштів з бан...</div>
<div class="t" style="left:1652.50px;top:641.02px;font-size:15.57px;line-height:15.57px;color:#5a5e63;letter-spacing:-0.434px;transform:scaleX(0.9469);transform-origin:0.00px 0;">3 000,00 ₴</div>
<div class="t" style="left:1733.90px;top:642.94px;font-size:15.43px;line-height:15.43px;color:#5c4d8e;letter-spacing:-0.710px;transform:scaleX(0.9368);transform-origin:0.00px 0;">ПЕРЕГЛЯНУТИ</div>
<div class="r" style="left:709px;top:669.4px;width:1172px;height:38.8px;background:#f9f9fa"></div>
<div class="r" style="left:1727px;top:674.4px;width:112px;height:29px;background:#fff"></div>
<div class="r" style="left:709px;top:708px;width:1172px;height:1px;background:#e4e6e9"></div>
<div class="t" style="left:727.60px;top:679.82px;font-size:15.57px;line-height:15.57px;color:#5a5e63;letter-spacing:-0.542px;transform:scaleX(0.9373);transform-origin:0.00px 0;">07.08.2024</div>
<div class="t" style="left:817.80px;top:679.82px;font-size:15.57px;line-height:15.57px;color:#5a5e63;letter-spacing:-0.427px;transform:scaleX(0.9479);transform-origin:0.00px 0;">PCSH1/2024/00001 ...</div>
<div class="t" style="left:969.70px;top:679.82px;font-size:15.57px;line-height:15.57px;color:#5a5e63;letter-spacing:-0.489px;transform:scaleX(0.9435);transform-origin:0.00px 0;">07.08.2024</div>
<div class="t" style="left:1122.30px;top:679.82px;font-size:15.57px;line-height:15.57px;color:#5a5e63;letter-spacing:-0.266px;transform:scaleX(0.9650);transform-origin:0.00px 0;">311002 Outstanding...</div>
<div class="t" style="left:1274.40px;top:679.82px;font-size:15.57px;line-height:15.57px;color:#5a5e63;letter-spacing:-0.443px;transform:scaleX(0.9517);transform-origin:0.00px 0;">TehnoDrons ТОВ</div>
<div class="t" style="left:1427.20px;top:679.82px;font-size:15.57px;line-height:15.57px;color:#5a5e63;letter-spacing:-0.340px;transform:scaleX(0.9533);transform-origin:0.00px 0;">Платіж клієнта 20 4...</div>
<div class="t" style="left:1644.60px;top:679.82px;font-size:15.57px;line-height:15.57px;color:#5a5e63;letter-spacing:-0.429px;transform:scaleX(0.9478);transform-origin:0.00px 0;">20 400,00 ₴</div>
<div class="t" style="left:1733.90px;top:681.74px;font-size:15.43px;line-height:15.43px;color:#5c4d8e;letter-spacing:-0.710px;transform:scaleX(0.9368);transform-origin:0.00px 0;">ПЕРЕГЛЯНУТИ</div>
<div class="r" style="left:709px;top:747px;width:1172px;height:1px;background:#e4e6e9"></div>
<div class="t" style="left:727.60px;top:718.62px;font-size:15.57px;line-height:15.57px;color:#5a5e63;letter-spacing:-0.542px;transform:scaleX(0.9373);transform-origin:0.00px 0;">31.07.2024</div>
<div class="t" style="left:817.80px;top:718.62px;font-size:15.57px;line-height:15.57px;color:#5a5e63;letter-spacing:-0.307px;transform:scaleX(0.9598);transform-origin:0.00px 0;">ЗП/2024/07/0003 (S...</div>
<div class="t" style="left:1122.30px;top:718.62px;font-size:15.57px;line-height:15.57px;color:#5a5e63;letter-spacing:-0.294px;transform:scaleX(0.9619);transform-origin:0.00px 0;">641100 Розрахунки ...</div>
<div class="t" style="left:1274.40px;top:718.62px;font-size:15.57px;line-height:15.57px;color:#5a5e63;letter-spacing:-0.132px;transform:scaleX(0.9783);transform-origin:0.00px 0;">firstsite, Unitsoft info</div>
<div class="t" style="left:1427.20px;top:718.62px;font-size:15.57px;line-height:15.57px;color:#5a5e63;letter-spacing:-0.700px;transform:scaleX(0.9537);transform-origin:0.00px 0;">ПДФО</div>
<div class="t" style="left:1647.00px;top:718.62px;font-size:15.57px;line-height:15.57px;color:#5a5e63;letter-spacing:-0.374px;transform:scaleX(0.9525);transform-origin:0.00px 0;">-6 300,00 ₴</div>
<div class="t" style="left:1733.90px;top:720.54px;font-size:15.43px;line-height:15.43px;color:#5c4d8e;letter-spacing:-0.710px;transform:scaleX(0.9368);transform-origin:0.00px 0;">ПЕРЕГЛЯНУТИ</div>
<div class="r" style="left:709px;top:747.0px;width:1172px;height:38.8px;background:#f9f9fa"></div>
<div class="r" style="left:1727px;top:752.0px;width:112px;height:29px;background:#fff"></div>
<div class="r" style="left:709px;top:785px;width:1172px;height:1px;background:#e4e6e9"></div>
<div class="t" style="left:727.60px;top:757.42px;font-size:15.57px;line-height:15.57px;color:#5a5e63;letter-spacing:-0.542px;transform:scaleX(0.9373);transform-origin:0.00px 0;">31.07.2024</div>
<div class="t" style="left:817.80px;top:757.42px;font-size:15.57px;line-height:15.57px;color:#5a5e63;letter-spacing:-0.307px;transform:scaleX(0.9598);transform-origin:0.00px 0;">ЗП/2024/07/0003 (S...</div>
<div class="t" style="left:1122.30px;top:757.42px;font-size:15.57px;line-height:15.57px;color:#5a5e63;letter-spacing:-0.324px;transform:scaleX(0.9583);transform-origin:0.00px 0;">642000 Розрахунки ...</div>
<div class="t" style="left:1274.40px;top:757.42px;font-size:15.57px;line-height:15.57px;color:#5a5e63;letter-spacing:-0.132px;transform:scaleX(0.9783);transform-origin:0.00px 0;">firstsite, Unitsoft info</div>
<div class="t" style="left:1427.20px;top:757.42px;font-size:15.57px;line-height:15.57px;color:#5a5e63;letter-spacing:-1.976px;transform:scaleX(0.8973);transform-origin:0.00px 0;">ВЗ</div>
<div class="t" style="left:1659.00px;top:757.42px;font-size:15.57px;line-height:15.57px;color:#5a5e63;letter-spacing:-0.404px;transform:scaleX(0.9508);transform-origin:0.00px 0;">-525,00 ₴</div>
<div class="t" style="left:1733.90px;top:759.34px;font-size:15.43px;line-height:15.43px;color:#5c4d8e;letter-spacing:-0.710px;transform:scaleX(0.9368);transform-origin:0.00px 0;">ПЕРЕГЛЯНУТИ</div>
</body></html>
